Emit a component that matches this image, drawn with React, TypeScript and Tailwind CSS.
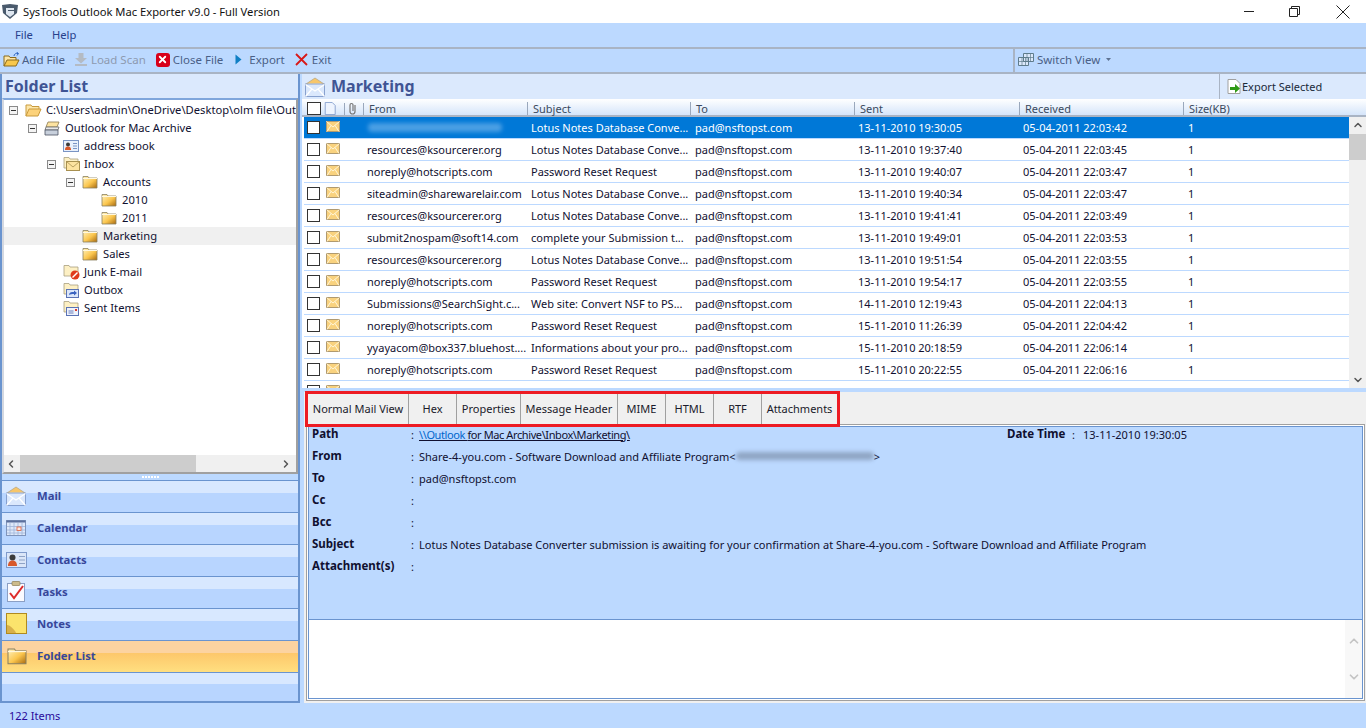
import { useId } from "react";
import { ChevronDown, ChevronLeft, ChevronRight, ChevronUp, X } from "lucide-react";

const rows = [
  { from: "", subject: "Lotus Notes Database Conve...", sent: "13-11-2010 19:30:05", received: "05-04-2011 22:03:42" },
  { from: "resources@ksourcerer.org", subject: "Lotus Notes Database Conve...", sent: "13-11-2010 19:37:40", received: "05-04-2011 22:03:45" },
  { from: "noreply@hotscripts.com", subject: "Password Reset Request", sent: "13-11-2010 19:40:07", received: "05-04-2011 22:03:47" },
  { from: "siteadmin@sharewarelair.com", subject: "Lotus Notes Database Conve...", sent: "13-11-2010 19:40:34", received: "05-04-2011 22:03:47" },
  { from: "resources@ksourcerer.org", subject: "Lotus Notes Database Conve...", sent: "13-11-2010 19:41:41", received: "05-04-2011 22:03:49" },
  { from: "submit2nospam@soft14.com", subject: "complete your Submission t...", sent: "13-11-2010 19:49:01", received: "05-04-2011 22:03:53" },
  { from: "resources@ksourcerer.org", subject: "Lotus Notes Database Conve...", sent: "13-11-2010 19:51:54", received: "05-04-2011 22:03:55" },
  { from: "noreply@hotscripts.com", subject: "Password Reset Request", sent: "13-11-2010 19:54:17", received: "05-04-2011 22:03:55" },
  { from: "Submissions@SearchSight.c...", subject: "Web site: Convert NSF to PS...", sent: "14-11-2010 12:19:43", received: "05-04-2011 22:04:13" },
  { from: "noreply@hotscripts.com", subject: "Password Reset Request", sent: "15-11-2010 11:26:39", received: "05-04-2011 22:04:42" },
  { from: "yyayacom@box337.bluehost....", subject: "Informations about your pro...", sent: "15-11-2010 20:18:59", received: "05-04-2011 22:06:14" },
  { from: "noreply@hotscripts.com", subject: "Password Reset Request", sent: "15-11-2010 20:22:55", received: "05-04-2011 22:06:16" },
  { from: "", subject: "", sent: "", received: "" },
];

type TreeIcon = "open" | "archive" | "book" | "mail" | "folder" | "junk" | "outbox" | "sent";

const tree: { label: string; pad: string; icon: TreeIcon; expander?: boolean; active?: boolean }[] = [
  { label: "C:\\Users\\admin\\OneDrive\\Desktop\\olm file\\Out", pad: "pl-[5px]", icon: "open", expander: true },
  { label: "Outlook for Mac Archive", pad: "pl-[24px]", icon: "archive", expander: true },
  { label: "address book", pad: "pl-[43px]", icon: "book" },
  { label: "Inbox", pad: "pl-[43px]", icon: "mail", expander: true },
  { label: "Accounts", pad: "pl-[62px]", icon: "folder", expander: true },
  { label: "2010", pad: "pl-[81px]", icon: "folder" },
  { label: "2011", pad: "pl-[81px]", icon: "folder" },
  { label: "Marketing", pad: "pl-[62px]", icon: "folder", active: true },
  { label: "Sales", pad: "pl-[62px]", icon: "folder" },
  { label: "Junk E-mail", pad: "pl-[43px]", icon: "junk" },
  { label: "Outbox", pad: "pl-[43px]", icon: "outbox" },
  { label: "Sent Items", pad: "pl-[43px]", icon: "sent" },
];

const tabs = [
  { label: "Normal Mail View", w: "w-[101px]" },
  { label: "Hex", w: "w-[48px]" },
  { label: "Properties", w: "w-[64px]" },
  { label: "Message Header", w: "w-[97px]" },
  { label: "MIME", w: "w-[48px]" },
  { label: "HTML", w: "w-[48px]" },
  { label: "RTF", w: "w-[48px]" },
  { label: "Attachments", w: "w-[75px]" },
];

const columns = [
  { label: "From", w: "w-[164px]" },
  { label: "Subject", w: "w-[163px]" },
  { label: "To", w: "w-[164px]" },
  { label: "Sent", w: "w-[165px]" },
  { label: "Received", w: "w-[164px]" },
  { label: "Size(KB)", w: "w-[150px]" },
];

function FolderIcon({ className = "w-[16px] h-[14px]" }: { className?: string }) {
  const id = useId();
  return (
    <svg viewBox="0 0 16 14" className={className}>
      <defs>
        <linearGradient id={id} x1="0" y1="0" x2="1" y2="1">
          <stop offset="0" stopColor="#fff3c0" />
          <stop offset="0.55" stopColor="#fbc64e" />
          <stop offset="1" stopColor="#a86a10" />
        </linearGradient>
      </defs>
      <path d="M1 3V1.500h5L7 3h8v10H1z" fill={`url(#${id})`} stroke="#8a8060" strokeWidth="0.8" />
      <path d="M1 3.500h14" stroke="#fff8e0" strokeWidth="1" />
    </svg>
  );
}

function OpenFolder() {
  return (
    <svg viewBox="0 0 17 14" className="h-[14px] w-[17px]">
      <path d="M1 13V2h5l1 1.500h7V6" fill="#fde6a8" stroke="#c99a3c" strokeWidth="1" />
      <path d="M1 13l3-7h12l-3 7z" fill="#fcd27a" stroke="#c99a3c" strokeWidth="1" />
    </svg>
  );
}

function SmallEnvelope() {
  return (
    <svg viewBox="0 0 14 11" className="h-[11px] w-[14px]">
      <rect x="0.500" y="0.500" width="13" height="10" fill="#f9d27e" stroke="#b09a70" />
      <path d="M0.500 0.500L7 6l6.500-5.500M1 10.500L5 4.500M13 10.500L9 4.500" fill="none" stroke="#fff5d8" strokeWidth="1" />
    </svg>
  );
}

function BadgedFolder({ children }: { children?: React.ReactNode }) {
  return (
    <svg viewBox="0 0 17 16" className="h-[16px] w-[17px]">
      <path d="M1 12V1.500h5L7 3h8v9z" fill="#fdf0c4" stroke="#a8a080" strokeWidth="0.8" />
      {children}
    </svg>
  );
}

function TreeGlyph({ icon }: { icon: TreeIcon }) {
  switch (icon) {
    case "open":
      return <OpenFolder />;
    case "folder":
      return <FolderIcon />;
    case "archive":
      return (
        <svg viewBox="0 0 17 15" className="h-[15px] w-[17px]">
          <path d="M4 1h11l-2 5H2z" fill="#fde3a0" stroke="#8a7a50" strokeWidth="0.8" />
          <path d="M2 6h13l-1 3H1z" fill="#e8e8e8" stroke="#6a6a6a" strokeWidth="0.8" />
          <path d="M1 9h13v5H1z" fill="#c8d0dc" stroke="#4a5060" strokeWidth="0.8" />
        </svg>
      );
    case "book":
      return (
        <svg viewBox="0 0 16 12" className="h-[12px] w-[16px]">
          <rect x="0.500" y="0.500" width="15" height="11" fill="#e8f0fc" stroke="#7a94c4" />
          <circle cx="5" cy="4.500" r="2" fill="#3a3a3a" />
          <path d="M2 10c0-3 1.500-3.500 3-3.500S8 7 8 10z" fill="#d8582a" />
          <path d="M10 3.500h4M10 6h4M10 8.500h4" stroke="#7a94c4" strokeWidth="1" />
        </svg>
      );
    case "mail":
      return (
        <BadgedFolder>
          <g transform="translate(3 5)">
            <rect x="0.500" y="0.500" width="13" height="9" fill="#fde3a0" stroke="#a89050" />
            <path d="M0.500 0.500L7 6l6.500-5.500" fill="none" stroke="#a89050" strokeWidth="0.8" />
          </g>
        </BadgedFolder>
      );
    case "junk":
      return (
        <BadgedFolder>
          <circle cx="12" cy="11" r="4.500" fill="#e03a1c" />
          <path d="M9.500 13.500l5-5" stroke="#fff" strokeWidth="1.400" />
        </BadgedFolder>
      );
    case "outbox":
      return (
        <BadgedFolder>
          <rect x="3.500" y="7.500" width="12" height="8" fill="#dbe6fa" stroke="#5a72b4" />
          <path d="M6 13c0-2.500 2-3 5-3V8.500l3 2.500-3 2.500V12c-2 0-3.500 0-5 1z" fill="#3a62c0" />
        </BadgedFolder>
      );
    case "sent":
      return (
        <BadgedFolder>
          <rect x="3.500" y="7.500" width="12" height="8" fill="#eef2fc" stroke="#5a72b4" />
          <path d="M5.500 11h5M5.500 13h5" stroke="#5a72b4" strokeWidth="0.900" />
          <rect x="12" y="9" width="2" height="2" fill="#d8382a" />
        </BadgedFolder>
      );
  }
}

function OpenEnvelope({ className }: { className: string }) {
  return (
    <svg viewBox="0 0 20 20" className={className}>
      <path d="M1 7L10 1l9 6v2H1z" fill="#f7c66a" stroke="#b8a888" strokeWidth="0.8" />
      <path d="M3 6.500h14L10 12z" fill="#fff6de" />
      <rect x="0.500" y="7" width="19" height="12.500" fill="#dbe8fc" stroke="#7f9acb" strokeWidth="0.900" />
      <path d="M0.500 7.500L10 14l9.500-6.500M0.500 19.500L7 12M19.500 19.500L13 12" fill="none" stroke="#fff" strokeWidth="1.200" />
    </svg>
  );
}

function NavGlyph({ name }: { name: string }) {
  switch (name) {
    case "Mail":
      return <OpenEnvelope className="h-[20px] w-[20px]" />;
    case "Calendar":
      return (
        <svg viewBox="0 0 20 16" className="h-[16px] w-[20px]">
          <rect x="0.500" y="0.500" width="19" height="15" fill="#dde8fa" stroke="#7f94bb" />
          <rect x="0.500" y="0.500" width="19" height="2" fill="#5b6f9c" />
          <path d="M4 3v12M8 3v12M12 3v12M16 3v12M1 6.500h18M1 10h18M1 13h18" stroke="#a0b4d8" strokeWidth="0.800" />
          <rect x="11" y="7" width="4" height="3.500" fill="#fde8e0" stroke="#e0603a" strokeWidth="0.800" />
        </svg>
      );
    case "Contacts":
      return (
        <svg viewBox="0 0 21 16" className="h-[16px] w-[21px]">
          <rect x="0.500" y="0.500" width="20" height="15" fill="#dbe6f8" stroke="#7f9acb" />
          <circle cx="6.500" cy="5.500" r="3" fill="#3c3c3c" />
          <path d="M2 14c0-4 2-5.500 4.500-5.500S11 10 11 14z" fill="#d8582a" />
          <path d="M13 4.500h6M13 8h6M13 11.500h6" stroke="#8fa3c6" strokeWidth="1.200" />
        </svg>
      );
    case "Tasks":
      return (
        <svg viewBox="0 0 20 21" className="h-[21px] w-[20px]">
          <rect x="1.500" y="2.500" width="17" height="18" fill="#fbfbff" stroke="#8b9fc4" />
          <rect x="6" y="0.500" width="8" height="4" rx="1" fill="#cdbb8c" stroke="#8d7c50" strokeWidth="0.700" />
          <path d="M4 12l4 5 9-12" fill="none" stroke="#dd2a2a" strokeWidth="2" />
        </svg>
      );
    case "Notes":
      return (
        <svg viewBox="0 0 21 21" className="h-[21px] w-[21px]">
          <rect x="0.500" y="0.500" width="20" height="20" fill="#fbe36c" stroke="#b08a20" />
          <path d="M1 12c3 0 8 5 9 8H1z" fill="#d8b04a" />
        </svg>
      );
    default:
      return <FolderIcon className="h-[18px] w-[22px]" />;
  }
}

function Toolbar() {
  return (
    <div className="flex h-[27px] border-y-2 border-[#a9b4c4] bg-[#bcd9ff] text-[11.5px] text-[#4a5f86]">
      <div className="flex w-[1015px] items-center border-r-2 border-[#a9b4c4] pb-[2px] pl-[3px]">
        <span className="flex items-center gap-[2px]">
          <svg viewBox="0 0 17 15" className="h-[15px] w-[17px]">
            <path d="M1 14V4h5l1 1.500h6V8" fill="#fde6a8" stroke="#8a6a1c" strokeWidth="1" />
            <path d="M1 14l3-6h12l-3 6z" fill="#f8c84c" stroke="#8a6a1c" strokeWidth="1" />
            <path d="M11 4c0-2 2-3 4-2.500M13.500 0l2 1.500L14 3.500" fill="none" stroke="#2a62c0" strokeWidth="1" />
          </svg>
          Add File
        </span>
        <span className="ml-[9px] flex items-center gap-[3px] text-[#8d9ab0]">
          <svg viewBox="0 0 14 13" className="h-[13px] w-[14px]">
            <path d="M4.500 0h5v5H13L7 10.500 1 5h3.500z" fill="#b4bbc4" />
            <rect x="1" y="11" width="12" height="2" fill="#b4bbc4" />
          </svg>
          Load Scan
        </span>
        <span className="ml-[10px] flex items-center gap-[3px]">
          <span className="flex h-[14px] w-[14px] items-center justify-center rounded-[3px] bg-[#d8001a]">
            <X className="h-[11px] w-[11px] text-white" strokeWidth={4} />
          </span>
          Close File
        </span>
        <span className="ml-[12px] flex items-center gap-[7px]">
          <svg viewBox="0 0 7 11" className="h-[11px] w-[7px]">
            <path d="M0.500 0.500L6.500 5.500 0.500 10.500z" fill="#0f7fc4" />
          </svg>
          Export
        </span>
        <span className="ml-[10px] flex items-center gap-[4px]">
          <svg viewBox="0 0 13 13" className="h-[13px] w-[13px]">
            <path d="M1 1l11 11M12 1L1 12" stroke="#d81818" strokeWidth="1.800" />
          </svg>
          Exit
        </span>
      </div>
      <div className="flex items-center pb-[2px] pl-[3px]">
        <svg viewBox="0 0 16 13" className="mr-[3px] h-[13px] w-[16px]">
          <path d="M0.500 4.500h10v8h-10zM5.500 0.500h10v8h-10z" fill="#dbe8fa" stroke="#5f7c8c" />
          <path d="M4 4.500v8M7.500 4.500v8M.5 8.500h10M9 .5v8M12.500 .5v8M5.500 4.500h10" stroke="#5f7c8c" strokeWidth="0.700" />
        </svg>
        Switch View
        <svg viewBox="0 0 5 3" className="ml-[6px] h-[3px] w-[5px]">
          <path d="M0 0h5L2.500 3z" fill="#5e7292" />
        </svg>
      </div>
    </div>
  );
}

function FolderPane() {
  return (
    <div className="flex w-[300px] shrink-0 flex-col border-x-2 border-b-2 border-[#6a94cf] bg-[#bcd9ff]">
      <div className="flex h-[24px] shrink-0 items-center bg-[#dbe9fd] pl-[3px] text-[16px] font-bold leading-none text-[#3f5494]">Folder List</div>
      <div className="flex h-[376px] shrink-0 flex-col border-2 border-t-[#7fa6dc] border-r-[#a0a0a0] border-l-[#d4d8e0] border-b-[#a0a0a0] bg-white pt-px text-[11.2px] text-[#101030]">
        <div className="flex-1 overflow-hidden">
          {tree.map((t) => (
            <div key={t.label} className={`flex h-[18px] items-center whitespace-nowrap ${t.pad} ${t.active ? "bg-[#f0f0f0]" : ""}`}>
              <span className="flex w-[16px] shrink-0 items-center">
                {t.expander && (
                  <span className="flex h-[9px] w-[9px] items-center justify-center border border-[#8a8a8a] bg-[#f4f4f4]">
                    <span className="h-px w-[5px] bg-[#333333]" />
                  </span>
                )}
              </span>
              <span className="flex w-[21px] shrink-0 items-center">
                <TreeGlyph icon={t.icon} />
              </span>
              {t.label}
            </div>
          ))}
        </div>
        <div className="flex h-[17px] items-center bg-[#f0f0f0] text-[#555555]">
          <ChevronLeft className="ml-[1px] h-[12px] w-[12px]" strokeWidth={3} />
          <div className="ml-[3px] h-full w-[176px] bg-[#cdcdcd]" />
          <div className="flex-1" />
          <ChevronRight className="mr-[4px] h-[12px] w-[12px]" strokeWidth={3} />
        </div>
      </div>
      <div className="flex h-[7px] shrink-0 items-center justify-center gap-[1px] border-b border-[#6a94cf]">
        {[0, 1, 2, 3, 4, 5].map((i) => (
          <span key={i} className="h-[2px] w-[2px] bg-white" />
        ))}
      </div>
      {["Mail", "Calendar", "Contacts", "Tasks", "Notes", "Folder List"].map((n) => {
        const on = n === "Folder List";
        return (
          <div key={n} className="relative flex h-[32px] shrink-0 flex-col border-b border-[#6a94cf]">
            <div className={on ? "h-[12px] bg-[#fcd3a0]" : "h-[12px] bg-[#d8e8ff]"} />
            <div className={on ? "flex-1 bg-gradient-to-b from-[#fdc76a] to-[#ffdf80]" : "flex-1 bg-[#b8d5ff]"} />
            <div className="absolute inset-0 flex items-center pb-[2px] pl-[4px] text-[11.3px] font-bold text-[#37479a]">
              <span className="flex w-[31px] shrink-0 items-center">
                <NavGlyph name={n} />
              </span>
              {n}
            </div>
          </div>
        );
      })}
      <div className="flex flex-1 flex-col">
        <div className="h-[11px] bg-[#d8e8ff]" />
        <div className="flex-1 bg-[#b8d5ff]" />
      </div>
    </div>
  );
}

function MailList() {
  return (
    <div className="flex h-[271px] shrink-0 bg-white pl-[2px]">
      <div className="w-[1045px] overflow-hidden">
        {rows.map((r, i) => {
          const sel = i === 0;
          return (
            <div key={i} className={`flex h-[22px] shrink-0 items-center border-b border-[#bcd9ff] ${sel ? "bg-[#0078d7] text-white" : "text-[#101030]"}`}>
              <span className="ml-[3px] h-[13px] w-[13px] shrink-0 border border-[#333333] bg-white" />
              <span className="ml-[6px] flex w-[41px] shrink-0 -translate-y-px">
                <SmallEnvelope />
              </span>
              <span className="w-[164px] shrink-0 whitespace-nowrap">
                {sel ? <span className="ml-[1px] inline-block h-[9px] w-[134px] rounded bg-[#4a9fe4] blur-[2px]" /> : r.from}
              </span>
              <span className="w-[164px] shrink-0 whitespace-nowrap">{r.subject}</span>
              <span className="w-[163px] shrink-0">{r.subject && "pad@nsftopst.com"}</span>
              <span className="w-[165px] shrink-0">{r.sent}</span>
              <span className="w-[165px] shrink-0">{r.received}</span>
              <span>{r.subject && "1"}</span>
            </div>
          );
        })}
      </div>
      <div className="flex w-[17px] flex-col items-center bg-[#f0f0f0] text-[#555555]">
        <ChevronUp className="mt-[2px] h-[12px] w-[12px]" strokeWidth={3} />
        <div className="mt-[3px] h-[26px] w-full bg-[#cdcdcd]" />
        <div className="flex-1" />
        <ChevronDown className="mb-[2px] h-[12px] w-[12px]" strokeWidth={3} />
      </div>
    </div>
  );
}

function DetailRow({ label, children }: { label: string; children?: React.ReactNode }) {
  return (
    <div className="flex h-[22px] items-center whitespace-nowrap">
      <span className="w-[99px] shrink-0 text-[11.5px] font-bold">{label}</span>
      <span className="w-[8px] shrink-0">:</span>
      {children}
    </div>
  );
}

function Detail() {
  return (
    <div className="-mt-[3px] ml-[2px] mr-px border border-[#a0a0a0] bg-white p-px">
      <div className="flex h-[273px] flex-col border border-[#6a94cf]">
        <div className="h-[192px] shrink-0 bg-[#bcd9ff] pl-[3px] text-[#101030]">
          <div className="flex h-[14px] items-center whitespace-nowrap">
            <span className="w-[99px] shrink-0 text-[11.5px] font-bold">Path</span>
            <span className="w-[8px] shrink-0">:</span>
            <span className="w-[588px] shrink-0 tracking-[-0.4px] underline">
              <span className="text-[#0066cc]">\\Outlook </span>for Mac Archive\Inbox\Marketing\
            </span>
            <span className="w-[65px] shrink-0 text-[11.5px] font-bold">Date Time</span>
            <span className="w-[11px] shrink-0">:</span>
            13-11-2010 19:30:05
          </div>
          <div className="mt-[4px]">
            <DetailRow label="From">
              Share-4-you.com - Software Download and Affiliate Program&lt;
              <span className="inline-block h-[8px] w-[138px] rounded bg-[#8fa5c4] blur-[2px]" />
              &gt;
            </DetailRow>
            <DetailRow label="To">pad@nsftopst.com</DetailRow>
            <DetailRow label="Cc" />
            <DetailRow label="Bcc" />
            <DetailRow label="Subject">Lotus Notes Database Converter submission is awaiting for your confirmation at Share-4-you.com - Software Download and Affiliate Program</DetailRow>
            <DetailRow label="Attachment(s)" />
          </div>
        </div>
        <div className="flex flex-1 justify-end border-t border-[#6a94cf] bg-white">
          <div className="flex w-[17px] flex-col items-center justify-between bg-[#f8f8f8] py-[14px] text-[#c4c4c4]">
            <ChevronUp className="h-[14px] w-[14px]" strokeWidth={3} />
            <ChevronDown className="h-[14px] w-[14px]" strokeWidth={3} />
          </div>
        </div>
      </div>
    </div>
  );
}

export default function App() {
  return (
    <div className="flex h-[728px] w-[1366px] flex-col overflow-hidden bg-[#bcd9ff] font-['Noto_Sans',sans-serif] text-[11px] leading-none">
      <div className="flex h-[23px] shrink-0 items-center bg-white pl-[2px] text-[11.2px] text-[#111111]">
        <svg viewBox="0 0 16 15" className="mr-[5px] h-[15px] w-[16px]">
          <path d="M0 1l8-1 8 1-1 8-7 6-7-6z" fill="#4a5a6c" />
          <path d="M4 4h8v2H6v1h6v3l-4 3-4-3z" fill="#dfe7f0" />
        </svg>
        SysTools Outlook Mac Exporter v9.0 - Full Version
        <div className="ml-auto flex items-center">
          <span className="mr-[35px] h-px w-[10px] bg-[#222222]" />
          <svg viewBox="0 0 11 11" className="mr-[36px] h-[11px] w-[11px]">
            <path d="M0.500 2.500h8v8h-8zM2.500 2.500V0.500h8v8H8.500" fill="none" stroke="#222222" strokeWidth="1" />
          </svg>
          <svg viewBox="0 0 14 14" className="mr-[16px] h-[14px] w-[14px]">
            <path d="M0.500 0.500l13 13M13.500 0.500l-13 13" stroke="#222222" strokeWidth="1" />
          </svg>
        </div>
      </div>
      <div className="flex h-[24px] shrink-0 items-center pl-[15px] text-[11.2px] text-[#27408b]">
        <span>File</span>
        <span className="ml-[19px]">Help</span>
      </div>
      <Toolbar />
      <div className="flex min-h-0 flex-1">
        <FolderPane />
        <div className="ml-[2px] flex min-w-0 flex-1 flex-col">
          <div className="flex h-[25px] shrink-0 items-center bg-[#dbe9fd]">
            <OpenEnvelope className="ml-[3px] h-[20px] w-[20px]" />
            <span className="ml-[6px] pb-[2px] text-[16px] font-bold text-[#3f5494]">Marketing</span>
            <div className="ml-auto mr-[1px] flex h-full w-[146px] items-center border-l border-[#a9b4c4] pl-[7px] text-[#1a2a3a]">
              <svg viewBox="0 0 14 15" className="mr-[1px] h-[15px] w-[14px]">
                <path d="M1 0.500h8l4 4v10H1z" fill="#fff" stroke="#a0a0a0" />
                <path d="M3 8h5V5l5 4.500-5 4.500v-3H3z" fill="#2f9a16" />
              </svg>
              Export Selected
            </div>
          </div>
          <div className="flex h-[18px] shrink-0 items-center border-b-2 border-[#a9b4c4] bg-gradient-to-b from-white to-[#d5e5fa] pl-[2px] pt-[3px] text-[#3a4a60]">
            <span className="ml-[3px] h-[13px] w-[14px] shrink-0 border border-[#333333] bg-white" />
            <svg viewBox="0 0 13 15" className="ml-[3px] h-[13px] w-[12px] shrink-0">
              <path d="M1 0.500h8l3.500 3.500v10.500H1z" fill="#eef4fe" stroke="#7f9acb" />
            </svg>
            <span className="ml-[8px] h-[12px] w-px shrink-0 bg-[#9aa8bc]" />
            <svg viewBox="0 0 9 13" className="ml-[3px] h-[13px] w-[9px] shrink-0">
              <path d="M7 3v6.500a2.500 2.500 0 0 1-5 0V3a1.500 1.500 0 0 1 3 0v6" fill="none" stroke="#777777" strokeWidth="1.200" />
            </svg>
            <span className="ml-[6px] h-[12px] w-px shrink-0 bg-[#9aa8bc]" />
            <span className="flex">
              {columns.map((c) => (
                <span key={c.label} className={`${c.w} h-[13px] shrink-0 border-r border-[#9aa8bc] pl-[5px] leading-[13px] last:border-r-0`}>
                  {c.label}
                </span>
              ))}
            </span>
          </div>
          <MailList />
          <div className="h-[3px] shrink-0" />
          <div className="ml-[2px] flex min-h-0 flex-1 flex-col">
            <div className="h-px shrink-0" />
            <div className="h-[35px] shrink-0 bg-[#f0f0f0]" />
            <div className="-mt-[36px] relative z-10 ml-px flex h-[36px] w-fit shrink-0 border-[3px] border-[#ed1c24] text-[#1a1a2a]">
              {tabs.map((t) => (
                <span key={t.label} className={`${t.w} flex items-center justify-center whitespace-nowrap border-r border-[#a0a0a0] bg-[#f0f0f0] pb-[2px] last:border-r-0`}>
                  {t.label}
                </span>
              ))}
            </div>
            <div className="flex-1 bg-[#f0f0f0]">
              <Detail />
            </div>
          </div>
        </div>
      </div>
      <div className="flex h-[25px] shrink-0 items-center pl-[9px] text-[#2a0a9a]">122 Items</div>
    </div>
  );
}
